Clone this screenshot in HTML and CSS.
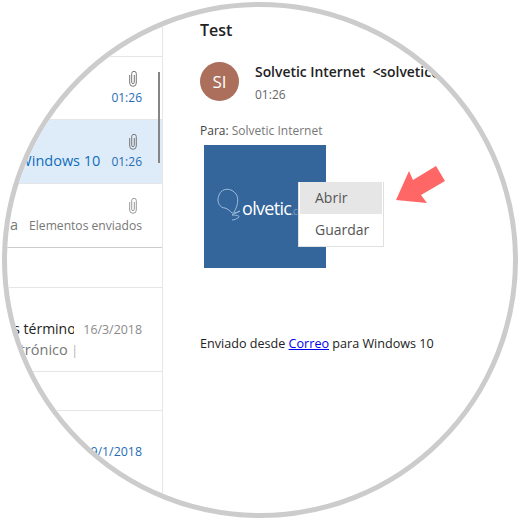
FILE: index.html
```html
<!DOCTYPE html>
<html lang="en">
<head>
  <meta charset="UTF-8" />
  <title>Correo</title>
  <link rel="stylesheet" href="styles.css">
</head>
<body>
  <div class="lens">
    <div class="list">
      <div class="row row-top"></div>

      <div class="row row-mail">
        <svg class="clip" viewBox="0 0 8 17"><path d="M5.3 5V12.3a1.3 1.3 0 0 1-2.6 0V3.6a2.3 2.3 0 0 1 4.6 0V13a3.3 3.3 0 0 1-6.6 0V5"/></svg>
        <div class="line"><span class="time">01:26</span></div>
      </div>

      <div class="row row-mail row-selected">
        <svg class="clip" viewBox="0 0 8 17"><path d="M5.3 5V12.3a1.3 1.3 0 0 1-2.6 0V3.6a2.3 2.3 0 0 1 4.6 0V13a3.3 3.3 0 0 1-6.6 0V5"/></svg>
        <div class="line"><span class="blue-subject">Test de Correo para Windows 10</span><span class="time">01:26</span></div>
      </div>

      <div class="row row-mail row-end">
        <svg class="clip clip-light" viewBox="0 0 8 17"><path d="M5.3 5V12.3a1.3 1.3 0 0 1-2.6 0V3.6a2.3 2.3 0 0 1 4.6 0V13a3.3 3.3 0 0 1-6.6 0V5"/></svg>
        <div class="line"><span class="preview">a</span><span class="folder">Elementos enviados</span></div>
      </div>

      <div class="row row-group"></div>

      <div class="row row-terms">
        <div class="line line-terms">
          <div class="subject"><span>Actualización de los términos</span></div>
          <span class="date">16/3/2018</span>
        </div>
        <div class="line line-left"><span class="preview">correo electrónico <span class="caret">|</span></span></div>
      </div>

      <div class="row row-group-small"></div>

      <div class="row row-last">
        <div class="line"><span class="time time-date">19/1/2018</span></div>
      </div>

      <div class="scrollbar"></div>
    </div>

    <div class="mail">
      <h1 class="mail-title">Test</h1>
      <div class="sender">
        <div class="avatar">SI</div>
        <div class="sender-info">
          <div class="sender-name">Solvetic Internet&nbsp; &lt;solvetic@outlook.com&gt;</div>
          <div class="sender-time">01:26</div>
        </div>
      </div>
      <p class="to"><span class="to-label">Para:</span> Solvetic Internet</p>

      <div class="attachment">
        <div class="logo">
          <svg class="logo-bubble" viewBox="0 0 26 35"><path d="M18 25C22 19 23 11 20 7C16 1 6 0 3 8C0 15 4 21 9 21C12 22 14 24 16 26C19 26 22 25 24 24L16 28C20 28 24 29 23 30C21 32 18 33 16 33"/></svg>
          <span class="logo-text">olvetic<span class="logo-dot">.com</span></span>
        </div>
        <div class="menu">
          <div class="menu-item menu-item-hover">Abrir</div>
          <div class="menu-item">Guardar</div>
        </div>
      </div>

      <p class="signature">Enviado desde <a href="#">Correo</a> para Windows 10</p>

      <svg class="arrow" viewBox="0 0 60 50"><polygon points="2,39 15,10 19,19 42,5 51,20 27,34 33,42"/></svg>
    </div>
  </div>
</body>
</html>
```

FILE: styles.css
```css
html, body {
  margin: 0;
  padding: 0;
  background-color: white;
  font-family: "Open Sans", "Noto Sans", sans-serif;
}

.lens {
  box-sizing: border-box;
  width: 516px;
  height: 516px;
  margin: 2px;
  display: flex;
  border: 5px solid #cccccc;
  border-radius: 50%;
  overflow: hidden;
  background-color: white;
}

.list {
  position: relative;
  flex: none;
  width: 156px;
  border-right: 1px solid #e6e6e6;
  box-sizing: border-box;
}

.row {
  box-sizing: border-box;
  display: flex;
  flex-direction: column;
  align-items: flex-end;
  padding-right: 20px;
  border-bottom: 1px solid #e6e6e6;
  white-space: nowrap;
}

.row-top { height: 50px; }
.row-mail { height: 63px; padding-top: 13px; gap: 2px; }
.row-selected { height: 64px; background-color: #deecf9; }
.row-end { height: 64px; border-bottom-color: #cccccc; }
.row-group { height: 40px; }
.row-terms { height: 84px; padding-top: 32px; }
.row-group-small { height: 39px; }
.row-last { height: 90px; padding-top: 32px; border-bottom: none; }

.line {
  display: flex;
  align-items: baseline;
  justify-content: flex-end;
  width: 100%;
  gap: 11px;
  font-size: 12px;
  line-height: 18px;
}

.line-terms { gap: 9px; }

.line-left {
  align-self: flex-start;
  width: 71px;
  margin-top: 2px;
}

.clip {
  width: 8px;
  height: 17px;
  margin-right: 5px;
}

.clip path {
  fill: none;
  stroke: #777777;
  stroke-width: 1;
}

.clip-light path { stroke: #999999; }

.time { color: #1f6db5; }
.time-date { font-size: 12.4px; }
.blue-subject { color: #106ebe; font-size: 14.5px; }
.folder { color: #777777; font-size: 12.1px; }
.date { color: #8a8a8a; font-size: 12.4px; }
.preview { color: #777777; font-size: 14.5px; }
.caret { font-size: 12px; font-weight: 300; }

.subject {
  flex: 1;
  min-width: 0;
  display: flex;
  justify-content: flex-end;
  overflow: hidden;
  color: #222222;
  font-size: 14px;
}

.subject span { margin-right: -8px; }

.scrollbar {
  position: absolute;
  top: 65px;
  right: 2px;
  width: 2px;
  height: 91px;
  background-color: #858585;
}

.mail {
  position: relative;
  flex: 1;
  min-width: 0;
  padding: 10px 0 0 37px;
  white-space: nowrap;
  color: #222222;
}

.mail-title {
  margin: 0;
  font-size: 16px;
  line-height: 26px;
  font-weight: 600;
}

.sender {
  display: flex;
  gap: 16px;
  margin-top: 19px;
}

.avatar {
  flex: none;
  width: 39px;
  height: 39px;
  display: flex;
  align-items: center;
  justify-content: center;
  border-radius: 50%;
  background-color: #ab6f5c;
  color: white;
  font-size: 17px;
}

.sender-name {
  font-size: 13.9px;
  font-weight: 600;
  line-height: 20px;
}

.sender-time {
  margin-top: 4px;
  color: #666666;
  font-size: 12px;
  line-height: 18px;
}

.to {
  margin: 18px 0 0;
  color: #777777;
  font-size: 12px;
  line-height: 18px;
}

.to-label { color: #444444; }

.attachment {
  position: relative;
  box-sizing: border-box;
  width: 122px;
  height: 123px;
  margin: 5px 0 0 4px;
  padding: 42px 0 0 12px;
  background-color: #34659b;
}

.logo {
  display: flex;
  align-items: flex-end;
  color: white;
}

.logo-bubble {
  flex: none;
  width: 26px;
  height: 35px;
}

.logo-bubble path {
  fill: none;
  stroke: #9dbbdc;
  stroke-width: 1;
}

.logo-text {
  font-size: 18px;
  line-height: 22px;
  letter-spacing: -0.7px;
}

.logo-dot {
  color: #7f9fc4;
  font-size: 10px;
}

.menu {
  position: absolute;
  top: 37px;
  left: 94px;
  box-sizing: border-box;
  width: 86px;
  height: 65px;
  padding: 0 1px;
  background-color: white;
  border: 1px solid #e0e0e0;
  border-width: 0 1px 1px 1px;
}

.menu-item {
  height: 32px;
  padding-left: 15px;
  color: #555555;
  font-size: 14px;
  line-height: 32px;
}

.menu-item-hover { background-color: #e6e6e6; }

.signature {
  margin: 67px 0 0;
  font-size: 12.6px;
  line-height: 18px;
}

.signature a { color: #0000ee; }

.arrow {
  position: absolute;
  top: 154px;
  left: 231px;
  width: 60px;
  height: 50px;
}

.arrow polygon { fill: #ff6666; }
```
